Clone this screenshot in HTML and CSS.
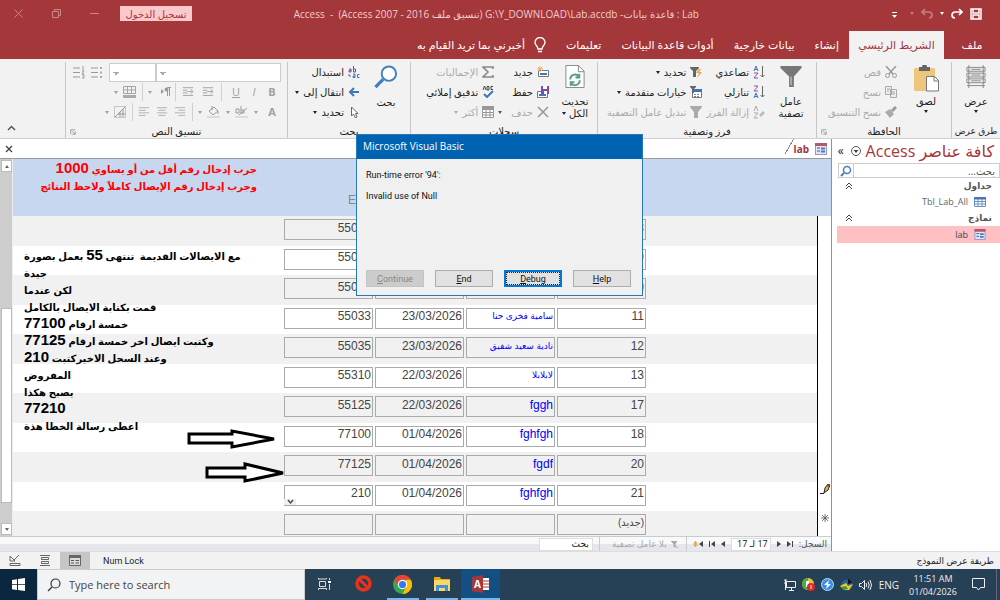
FILE: index.html
```html
<!DOCTYPE html>
<html lang="ar" dir="rtl">
<head>
<meta charset="utf-8">
<title>Lab - Access</title>
<link rel="stylesheet" href="styles.css">
</head>
<body>
<svg class="sprite" aria-hidden="true">
  <symbol id="lines" viewBox="0 0 14 14"><path d="M1 2h12M3 5h8M1 8h12M3 11h8" stroke="#aaa" fill="none"/></symbol>
  <symbol id="linesl" viewBox="0 0 14 14"><path d="M1 2h12M1 5h8M1 8h12M1 11h8" stroke="#aaa" fill="none"/></symbol>
  <symbol id="linesr" viewBox="0 0 14 14"><path d="M1 2h12M5 5h8M1 8h12M5 11h8" stroke="#aaa" fill="none"/></symbol>
  <symbol id="indent" viewBox="0 0 14 14"><path d="M1 2h12M1 5h5M1 8h5M1 11h12M6 6.500h6M10 4l3 2.500-3 2.500" stroke="#999" fill="none"/></symbol>
  <symbol id="funnel" viewBox="0 0 22 24"><path d="M0 1h22v2l-8 9v11h-5V12L0 3z" fill="#777"/><path d="M11 12v9" stroke="#ddd"/></symbol>
  <symbol id="form" viewBox="0 0 12 12"><rect x=".5" y=".5" width="11" height="11" fill="#dfe6f5" stroke="#8f9cc4"/><path d="M0 0h12v3H0z" fill="#b5586a"/><path d="M2 5h3M2 8h3" stroke="#445a96"/><path d="M6 4.500h4v2H6zM6 7.500h4v2H6z" fill="#5b73b5"/></symbol>
  <symbol id="chev" viewBox="0 0 8 8"><path d="M1 4l3-3 3 3M1 7l3-3 3 3" stroke="#444" fill="none"/></symbol>
  <symbol id="launch" viewBox="0 0 8 8"><path d="M1 7V1h6M7 3v4H3M3 3l3.500 3.500" stroke="#888" fill="none"/></symbol>
</svg>
<div class="app">
  <header class="titlebar">
    <div class="quick">
      <svg width="12" height="12" viewBox="0 0 12 12"><path d="M1 1h10v10H1zM3 1v4h6V1M3 11V7h6v4" fill="none" stroke="#fff" stroke-width="1.500"/></svg>
      <svg width="12" height="12" viewBox="0 0 12 12"><path d="M11 4H4a3 3 0 0 0 0 6M8 1l3 3-3 3" fill="none" stroke="#fff" stroke-width="1.700"/></svg>
      <span class="caret"></span>
      <svg class="dim" width="12" height="12" viewBox="0 0 12 12"><path d="M1 4h7a3 3 0 0 1 0 6M4 1L1 4l3 3" fill="none" stroke="#fff" stroke-width="1.700"/></svg>
      <span class="caret dim"></span>
      <svg class="more" width="5" height="6" viewBox="0 0 5 6"><path d="M0 .5h5" stroke="#fff"/><path d="M0 3h5L2.500 6z" fill="#fff"/></svg>
    </div>
    <h1 class="caption">Lab : قاعدة بيانات- <bdi dir="ltr">G:\Y_DOWNLOAD\Lab.accdb</bdi> (تنسيق ملف <bdi dir="ltr">Access 2007 - 2016</bdi>) &nbsp;- &nbsp;Access</h1>
    <button class="signin">تسجيل الدخول</button>
    <div class="winbtns">
      <svg width="9" height="9" viewBox="0 0 9 9"><path d="M0 4.500h9" stroke="#cd8487"/></svg>
      <svg width="9" height="9" viewBox="0 0 9 9"><path d="M.5 2.500h6v6h-6zM2.500 2V.5h6v6H7" fill="none" stroke="#cd8487"/></svg>
      <svg width="9" height="9" viewBox="0 0 9 9"><path d="M.5.5l8 8M8.500.5l-8 8" stroke="#cd8487"/></svg>
    </div>
  </header>
  <nav class="tabs">
    <button class="tab file">ملف</button>
    <button class="tab active">الشريط الرئيسي</button>
    <button class="tab">إنشاء</button>
    <button class="tab">بيانات خارجية</button>
    <button class="tab">أدوات قاعدة البيانات</button>
    <button class="tab">تعليمات</button>
    <button class="tab tell"><svg width="12" height="16" viewBox="0 0 12 16"><path d="M4 12c0-3-3-3.500-3-6.500a5 5 0 0 1 10 0C11 8.500 8 9 8 12zM4 14.500h4" fill="none" stroke="#fff" stroke-width="1.300"/></svg>أخبرني بما تريد القيام به</button>
  </nav>
  <section class="ribbon">
    <div class="group views">
      <div class="tools">
        <button class="big"><svg width="20" height="23" viewBox="0 0 20 24"><path d="M.5 2.500h19v4H.5zM.5 8.500h19v4H.5zM.5 14.500h19v4H.5zM2.500 0v24M17.500 0v24M.5 21.500h19M5 4.500h10M5 10.500h10M5 16.500h10" fill="none" stroke="#888"/></svg>عرض<span class="caret"></span></button>
      </div>
      <div class="label">طرق عرض</div>
    </div>
    <div class="group clip">
      <div class="tools">
        <button class="big"><svg width="25" height="27" viewBox="0 0 25 27"><rect x="0" y="3" width="21" height="23" rx="1" fill="#edc57c"/><path d="M5 2h3a2.500 2.500 0 0 1 5 0h3v4H5z" fill="#666"/><path d="M12.500 11.500h8l4 4v10.500h-12z" fill="#fff" stroke="#777"/><path d="M20 11v5h5" fill="none" stroke="#777"/></svg>لصق<span class="caret"></span></button>
        <div class="stack">
          <button class="off"><svg width="12" height="12" viewBox="0 0 12 12"><path d="M1 0l7 8M11 0L4 8" stroke="#999" stroke-width="1.500"/><circle cx="2.500" cy="9.500" r="2" fill="none" stroke="#999"/><circle cx="9.500" cy="9.500" r="2" fill="none" stroke="#999"/></svg>قص</button>
          <button class="off"><svg width="12" height="12" viewBox="0 0 12 12"><path d="M.5.5h6v8h-6zM5.500 3.500h6v8h-6zM2 3h3M2 5h2M7 6h3M7 8h3" fill="#eee" stroke="#aaa"/></svg>نسخ</button>
          <button class="off"><svg width="12" height="12" viewBox="0 0 12 12"><path d="M0 6l5-3 4 5-4 4z" fill="#aaa"/><path d="M7 5l4-4" stroke="#999" stroke-width="3"/></svg>نسخ التنسيق</button>
        </div>
      </div>
      <div class="label">الحافظة<svg class="launcher" width="6" height="6"><use href="#launch"/></svg></div>
    </div>
    <div class="group sort">
      <div class="tools">
        <button class="big"><svg width="22" height="23"><use href="#funnel"/></svg>عامل<br>تصفية</button>
        <div class="stack az">
          <button><svg width="12" height="14" viewBox="0 0 12 14"><path d="M1 6l2-5 2 5M1.500 4.500h3" fill="none" stroke="#3c77b8"/><path d="M1 8h4l-4 5h4" fill="none" stroke="#8d55a8"/><path d="M9.500 1v11M7.500 10l2 2 2-2" fill="none" stroke="#666"/></svg>تصاعدي</button>
          <button><svg width="12" height="14" viewBox="0 0 12 14"><path d="M1 13l2-5 2 5M1.500 11.500h3" fill="none" stroke="#3c77b8"/><path d="M1 1h4L1 6h4" fill="none" stroke="#8d55a8"/><path d="M9.500 1v11M7.500 10l2 2 2-2" fill="none" stroke="#666"/></svg>تنازلي</button>
          <button class="off"><svg width="12" height="14" viewBox="0 0 12 14"><path d="M1 6l2-5 2 5M1 8h4l-4 5h4" fill="none" stroke="#aaa"/><path d="M6 10l4-4 2 2-4 4z" fill="#bbb"/></svg>إزالة الفرز</button>
        </div>
        <div class="stack">
          <button><svg width="12" height="12" viewBox="0 0 12 12"><path d="M0 1h9v1L6 5v6H3V5L0 2z" fill="#666"/><path d="M9 3L6 7h3l-2 5 5-6H9l2-3z" fill="#eda63a"/></svg>تحديد<span class="caret"></span></button>
          <button><svg width="12" height="12" viewBox="0 0 12 12"><path d="M2.500 3.500h9v8h-9z" fill="#fff" stroke="#777"/><path d="M4 3h8v3H4z" fill="#3c77b8"/><path d="M0 0h6v1L4 3v4H2V3L0 1z" fill="#666"/><path d="M4 8.500h6M4 10.500h6" stroke="#888" stroke-dasharray="2 1"/></svg>خيارات متقدمة<span class="caret"></span></button>
          <button class="off"><svg width="12" height="12" viewBox="0 0 12 12"><path d="M0 0h12v1L8 6v6H4V6L0 1z" fill="#aaa"/></svg>تبديل عامل التصفية</button>
        </div>
      </div>
      <div class="label">فرز وتصفية</div>
    </div>
    <div class="group records">
      <div class="tools">
        <button class="big"><svg width="20" height="23" viewBox="0 0 20 24"><path d="M.5.5h13l6 6v17H.5z" fill="#fff" stroke="#888"/><path d="M13.500 0v7h6" fill="none" stroke="#888"/><path d="M5 15a5 5 0 0 1 9-3M15 16a5 5 0 0 1-9 3M14.500 9v4h-4M5.500 22v-4h4" fill="none" stroke="#56a17a" stroke-width="2"/></svg>تحديث<span class="second-line">الكل<span class="caret"></span></span></button>
        <div class="stack">
          <button><svg width="12" height="12" viewBox="0 0 12 12"><path d="M1.500 4.500h10v6h-10z" fill="#fff" stroke="#777"/><path d="M3 7h7v2H3z" fill="#3c77b8"/><path d="M3 0v6M0 3h6M1 1l4 4M5 1L1 5" stroke="#edb45c"/></svg>جديد</button>
          <button><svg width="12" height="12" viewBox="0 0 12 12"><path d="M.5 5.500h10v6H.5z" fill="#fff" stroke="#777"/><path d="M2 8h7v2H2z" fill="#3c77b8"/><path d="M4 0h8v8H4z" fill="#8549a5"/><path d="M6 0h4v3H6zM7 5h3v3H7z" fill="#fff"/></svg>حفظ</button>
          <button class="off"><svg width="12" height="12" viewBox="0 0 12 12"><path d="M1 1l10 10M11 1L1 11" stroke="#999" stroke-width="1.600"/></svg>حذف<span class="caret dark"></span></button>
        </div>
        <div class="stack">
          <button class="off"><svg width="12" height="12" viewBox="0 0 12 12"><path d="M11 3V1H1l5 5-5 5h10V9" fill="none" stroke="#888" stroke-width="1.600"/></svg>الإجماليات</button>
          <button><svg width="12" height="12" viewBox="0 0 12 12"><path d="M1 4l1.500-4L4 4M5 .5v3.500h2V.5zM11 .5H9v3h2" fill="none" stroke="#444"/><path d="M2 8l3 3 6-6" fill="none" stroke="#3c77b8" stroke-width="2"/></svg>تدقيق إملائي</button>
          <button class="off"><svg width="12" height="12" viewBox="0 0 12 12"><path d="M.5.500h11v11H.5zM0 3.500h12M0 6.500h12M0 9h12M4 3v9M8 3v9" fill="#fff" stroke="#999"/><path d="M0 0h12v3H0z" fill="#999"/></svg>أكثر<span class="caret"></span></button>
        </div>
      </div>
      <div class="label">سجلات</div>
    </div>
    <div class="group find">
      <div class="tools">
        <button class="big"><svg width="24" height="24" viewBox="0 0 24 25"><circle cx="15" cy="9" r="7.500" fill="#fff" stroke="#4280bd" stroke-width="2"/><path d="M9 15l-8 8" stroke="#4280bd" stroke-width="3.500"/></svg>بحث</button>
        <div class="stack">
          <button><svg width="12" height="13" viewBox="0 0 12 13"><path d="M1 3h2v3H1V4.500h2M5.500 0v6h2V3h-2" fill="none" stroke="#7a4a95"/><path d="M5 8h2v3.500H5V10h2M11.500 8.500h-2v3h2" fill="none" stroke="#3c77b8"/><path d="M1 8v2h2" fill="none" stroke="#3c77b8"/></svg>استبدال</button>
          <button><svg width="12" height="12" viewBox="0 0 12 12"><path d="M11 6H3M6 2L2 6l4 4" fill="none" stroke="#3c77b8" stroke-width="2"/></svg>انتقال إلى<span class="caret"></span></button>
          <button><svg width="12" height="12" viewBox="0 0 12 12"><path d="M3.500 1v9l2-2 2 4 1.500-1-1.500-3.500H10z" fill="#fff" stroke="#666"/></svg>تحديد<span class="caret"></span></button>
        </div>
      </div>
      <div class="label">بحث</div>
    </div>
    <div class="group format">
      <div class="fmt">
        <div class="frow">
          <select class="font" aria-label="الخط"><option></option></select><select class="size" aria-label="حجم الخط"><option></option></select>
          <svg width="12" height="13" viewBox="0 0 12 13"><path d="M0 2h7M0 6.500h7M0 11h7" stroke="#999"/><path d="M9 1h2v2H9zM9 5.500h2v2H9zM9 10h2v2H9z" fill="#aaa"/></svg>
          <svg width="12" height="13" viewBox="0 0 12 13"><path d="M0 2h7M0 6.500h7M0 11h7M10 0v4M9 5h2l-2 3h2M9 9h2v3H9" fill="none" stroke="#999"/></svg>
        </div>
        <div class="frow r2">
          <button><b>B</b></button><button><i>I</i></button><button><u>U</u></button><span class="sep"></span>
          <svg width="14" height="12"><use href="#indent"/></svg><svg width="14" height="12"><use href="#indent"/></svg><span class="sep"></span>
          <button aria-label="اتجاه النص"><svg class="para" width="10" height="9" viewBox="0 0 10 9"><path d="M0 2l3 2.500L0 7z" fill="#999"/><path d="M6.500 9V.5H10M8.500 0v9" fill="none" stroke="#999"/><circle cx="5.500" cy="2.500" r="2" fill="#999"/></svg></button><span class="caret"></span><span class="sep"></span>
          <svg width="13" height="12" viewBox="0 0 13 12"><path d="M.5.5h12v7H.5zM0 4h13M4.500 0v8M8.500 0v8" fill="none" stroke="#a9a0a9"/><path d="M0 9h13v3H0z" fill="#aaa"/></svg><span class="caret"></span>
        </div>
        <div class="frow r3">
          <button><b>A</b></button><span class="caret"></span>
          <svg width="13" height="12" viewBox="0 0 13 12"><path d="M1 3h3v4H1zM6 0v7h3V4H6M12 2L4 9" fill="none" stroke="#999"/><path d="M0 10h13v2H0z" fill="#e0dbe0"/></svg><span class="caret"></span>
          <svg width="13" height="12" viewBox="0 0 13 12"><path d="M2 5l5-4 4 4-5 4zM11 5v3M5 0v4" fill="none" stroke="#999"/><path d="M0 10h13v2H0z" fill="#e0dbe0"/></svg><span class="caret"></span><span class="sep"></span>
          <svg width="12" height="12"><use href="#linesr"/></svg><svg width="12" height="12"><use href="#lines"/></svg><svg width="12" height="12"><use href="#linesl"/></svg><span class="sep"></span>
          <svg width="12" height="12" viewBox="0 0 12 12"><path d="M.5.5h11v11H.5z" fill="none" stroke="#999" stroke-dasharray="1 1"/><path d="M1 11L11 1M6 6v5M9 3v8M4 8h7" stroke="#999"/></svg><span class="caret"></span>
        </div>
      </div>
      <div class="label">تنسيق النص<svg class="launcher" width="6" height="6"><use href="#launch"/></svg></div>
    </div>
    <button class="collapse" aria-label="طي الشريط"><svg width="9" height="6" viewBox="0 0 9 6"><path d="M1 5l3.500-3.500L8 5" fill="none" stroke="#555" stroke-width="1.500"/></svg></button>
  </section>

  <main class="work">
    <aside class="navpane">
      <div class="navhead"><h2>كافة عناصر Access</h2><svg width="10" height="10" viewBox="0 0 10 10"><circle cx="5" cy="5" r="4.500" fill="none" stroke="#555"/><path d="M2.500 4h5L5 7z" fill="#444"/></svg><span class="shut">»</span></div>
      <div class="navsearch"><input type="text" aria-label="بحث" placeholder="بحث..."><svg width="14" height="12" viewBox="0 0 14 12"><circle cx="8" cy="5" r="3.500" fill="none" stroke="#4a7cb5" stroke-width="1.500"/><path d="M5 8l-3 3" stroke="#4a7cb5" stroke-width="2"/></svg></div>
      <div class="navgroup">جداول<svg width="8" height="8"><use href="#chev"/></svg></div>
      <div class="navitem"><svg width="12" height="10" viewBox="0 0 12 10"><path d="M.5.500h11v9H.5zM0 4.500h12M0 7h12M4 2v8M8 2v8" fill="#fff" stroke="#6c8fc4"/><path d="M0 0h12v2.500H0z" fill="#4e74b5"/></svg>Tbl_Lab_All</div>
      <div class="navgroup">نماذج<svg width="8" height="8"><use href="#chev"/></svg></div>
      <div class="navitem selected"><svg width="12" height="11"><use href="#form"/></svg>lab</div>
    </aside>
    <section class="doc">
      <div class="docbar">
        <div class="doctab"><svg width="12" height="12"><use href="#form"/></svg><b>lab</b></div>
        <button class="docclose" aria-label="إغلاق"><svg width="8" height="8" viewBox="0 0 8 8"><path d="M1 1l6 6M7 1L1 7" stroke="#444" stroke-width="1.300"/></svg></button>
      </div>
      <div class="formview">
        <div class="sheet">
          <div class="formhead"><p>جرب إدخال رقم أقل من أو يساوي <span class="n">1000</span><br>وجرب إدخال رقم الإيصال كاملاً ولاحظ النتائج</p><span class="colhead">E</span></div>
          <div class="formbody">
            <div class="selector">
              <svg width="10" height="10" viewBox="0 0 10 10"><path d="M0 9.500h4" stroke="#222"/><path d="M4 9l1-5 3-4 2 1-2 5z" fill="#d9c03b" stroke="#222"/><path d="M7 1l2 1" stroke="#c33" stroke-width="2"/></svg>
              <svg width="8" height="8" viewBox="0 0 8 8"><path d="M4 0v8M0 4h8M1 1l6 6M7 1L1 7" stroke="#555" stroke-width=".8"/></svg>
            </div>
            <div class="rows">
              <div class="row"><input aria-label="م" value="8"><input aria-label="الاسم" class="name" value=""><input aria-label="التاريخ" value=""><input aria-label="الإيصال" value="55030"></div>
              <div class="row"><input aria-label="م" value="9"><input aria-label="الاسم" class="name" value=""><input aria-label="التاريخ" value=""><input aria-label="الإيصال" value="55031"></div>
              <div class="row"><input aria-label="م" value="10"><input aria-label="الاسم" class="name" value=""><input aria-label="التاريخ" value=""><input aria-label="الإيصال" value="55032"></div>
              <div class="row"><input aria-label="م" value="11"><input aria-label="الاسم" class="name ar" value="سامية فخرى حنا"><input aria-label="التاريخ" value="23/03/2026"><input aria-label="الإيصال" value="55033"></div>
              <div class="row"><input aria-label="م" value="12"><input aria-label="الاسم" class="name ar" value="نادية سعيد شفيق"><input aria-label="التاريخ" value="23/03/2026"><input aria-label="الإيصال" value="55035"></div>
              <div class="row"><input aria-label="م" value="13"><input aria-label="الاسم" class="name ar" value="لابلابلا"><input aria-label="التاريخ" value="22/03/2026"><input aria-label="الإيصال" value="55310"></div>
              <div class="row"><input aria-label="م" value="17"><input aria-label="الاسم" class="name" value="fggh"><input aria-label="التاريخ" value="22/03/2026"><input aria-label="الإيصال" value="55125"></div>
              <div class="row"><input aria-label="م" value="18"><input aria-label="الاسم" class="name" value="fghfgh"><input aria-label="التاريخ" value="01/04/2026"><input aria-label="الإيصال" value="77100"></div>
              <div class="row"><input aria-label="م" value="20"><input aria-label="الاسم" class="name" value="fgdf"><input aria-label="التاريخ" value="01/04/2026"><input aria-label="الإيصال" value="77125"></div>
              <div class="row current"><input aria-label="م" value="21"><input aria-label="الاسم" class="name" value="fghfgh"><input aria-label="التاريخ" value="01/04/2026"><input aria-label="الإيصال" value="210"><svg class="drop" width="12" height="6" viewBox="0 0 12 6"><path d="M0 0h12v6H0z" fill="#eee"/><path d="M4 1l2.500 3L9 1" fill="none" stroke="#444" stroke-width="1.300"/></svg></div>
              <div class="row new"><input aria-label="م" class="ar" value="(جديد)"><input aria-label="الاسم" value=""><input aria-label="التاريخ" value=""><input aria-label="الإيصال" value=""></div>
            </div>
            <div class="notes">مع الايصالات القديمة &nbsp;تنتهى <span class="n">55</span> بعمل بصورة<br>جيدة<br>لكن عندما<br>قمت بكتابة الايصال بالكامل<br>خمسة ارقام <span class="n">77100</span><br>وكتبت ايصال اخر خمسة ارقام <span class="n">77125</span><br>وعند السحل الاخيركتبت <span class="n">210</span><br>المفروض<br>يصبح هكذا<br><span class="n">77210</span><br>اعطى رسالة الخطا هذة</div>
            <svg class="arrow first" width="90" height="20" viewBox="0 0 90 20"><path d="M2 5h43V2l42 8-42 8v-4H2z" fill="#fff" stroke="#000" stroke-width="3"/></svg>
            <svg class="arrow second" width="80" height="22" viewBox="0 0 80 22"><path d="M2 6h38V2l38 9-38 8v-4H2z" fill="#fff" stroke="#000" stroke-width="3"/></svg>
          </div>
        </div>
        <div class="scroll">
          <button aria-label="أعلى"><span class="up"></span></button><div class="track"><div class="thumb"></div></div><button aria-label="أسفل"><span class="caret"></span></button>
        </div>
      </div>
      <div class="recnav">
        <span>السجل:</span>
        <svg width="6" height="6" viewBox="0 0 6 6"><path d="M0 0l4 3-4 3zM5 0h1v6H5z" fill="#444"/></svg>
        <svg width="4" height="6" viewBox="0 0 4 6"><path d="M0 0l4 3-4 3z" fill="#444"/></svg>
        <input class="pos" aria-label="السجل الحالي" value="17 لـ 17">
        <svg width="4" height="6" viewBox="0 0 4 6"><path d="M4 0L0 3l4 3z" fill="#444"/></svg>
        <svg width="6" height="6" viewBox="0 0 6 6"><path d="M6 0L2 3l4 3zM0 0h1v6H0z" fill="#444"/></svg>
        <svg width="10" height="8" viewBox="0 0 10 8"><path d="M10 1L6 4l4 3z" fill="#444"/><path d="M2.500 1v6M0 4h5M1 2l3 4M4 2L1 6" stroke="#eaa63a"/></svg>
        <span class="nofilter"><svg width="7" height="7" viewBox="0 0 7 7"><path d="M0 0h6L4 3v3H3V3zM3 4l4 3" fill="#aaa" stroke="#aaa"/></svg>بلا عامل تصفية</span>
        <input class="recsearch" aria-label="بحث" value="بحث">
      </div>
    </section>
  </main>

  <footer class="status">
    <span class="mode">طريقة عرض النموذج</span>
    <span class="num">Num Lock</span>
    <div class="viewbtns">
      <button class="on" aria-label="نموذج"><svg width="12" height="11" viewBox="0 0 12 11"><path d="M.5.500h11v10H.5z" fill="#ddd" stroke="#666"/><path d="M0 0h12v3H0z" fill="#666"/><path d="M2 5.500h3M2 8h3M6.500 5.500H10M6.500 8H10" stroke="#555"/></svg></button>
      <button aria-label="تخطيط"><svg width="10" height="11" viewBox="0 0 10 11"><path d="M0 .5h10M0 10.500h10M1.500 2.500h7v2h-7zM1.500 6.500h7v2h-7z" fill="none" stroke="#666"/></svg></button>
      <button aria-label="تصميم"><svg width="12" height="11" viewBox="0 0 12 11"><path d="M1 1v5h5zM5 5l5-5M1 8.500h10v2H1z" fill="none" stroke="#666"/></svg></button>
    </div>
  </footer>

  <footer class="taskbar" dir="ltr">
    <button class="start" aria-label="Start"><svg width="13" height="13" viewBox="0 0 13 13"><path d="M0 2l5-.8v5H0zM6 1l7-1v6.200H6zM0 7h5v5l-5-.8zM6 7h7v6l-7-1z" fill="#fff"/></svg></button>
    <label class="tasksearch"><svg width="14" height="14" viewBox="0 0 14 14"><circle cx="8.500" cy="5.500" r="4.500" fill="none" stroke="#333" stroke-width="1.200"/><path d="M5 9l-4 4" stroke="#333" stroke-width="1.200"/></svg><input type="text" aria-label="Search" placeholder="Type here to search"></label>
    <button class="task" aria-label="Task view"><svg width="13" height="12" viewBox="0 0 13 12"><path d="M1.500 3.500h6v5h-6zM.5 1.500V0M.5 1h8V0M.5 12v-1.500h8V12M11.500 0v2M11.500 6v6" fill="none" stroke="#ddd"/><path d="M10 3h3v2h-3z" fill="#fff"/></svg></button>
    <button class="task" aria-label="Block"><svg width="17" height="17" viewBox="0 0 17 17"><circle cx="8.500" cy="8.500" r="6.500" fill="none" stroke="#e8331c" stroke-width="3.500"/><path d="M4 4l9 9" stroke="#e8331c" stroke-width="3"/></svg></button>
    <button class="task open" aria-label="Chrome"><svg width="19" height="19" viewBox="0 0 20 20"><circle cx="10" cy="10" r="10" fill="#34a853"/><path d="M1.300 5a10 10 0 0 1 17.400 0H10L6 12z" fill="#ea4335"/><path d="M18.700 5A10 10 0 0 1 10 20l4-8-1-7z" fill="#fbbc04"/><circle cx="10" cy="10" r="5" fill="#fff"/><circle cx="10" cy="10" r="3.800" fill="#3b78e7"/></svg></button>
    <button class="task open" aria-label="File Explorer"><svg width="18" height="15" viewBox="0 0 18 15"><path d="M1 0h6l1 2h9v12H1z" fill="#e8a91c"/><path d="M1 3h16v11H1z" fill="#fcd667"/><path d="M3 14V8h12v6h-3v-3H6v3z" fill="#3b93d8"/></svg></button>
    <button class="task open active" aria-label="Access"><svg width="18" height="18" viewBox="0 0 18 18"><path d="M10 3h7v12h-7z" fill="#fff"/><path d="M10 6h8M10 9h8M10 12h8" stroke="#a4373a"/><path d="M0 2l11-2v18L0 16z" fill="#a4373a"/><text class="logo" x="2" y="13">A</text></svg></button>
    <div class="tray">
      <svg width="13" height="12" viewBox="0 0 13 12"><path d="M3.500 2.500h9v6h-9zM6 11.500h5M8.500 9v2M1 1h3M2.500 1v10M1 4h2" fill="none" stroke="#eee"/></svg>
      <svg width="13" height="13" viewBox="0 0 13 13"><circle cx="6" cy="6" r="6" fill="#e6c63a"/><path d="M0 6a6 6 0 0 1 6-6v12a6 6 0 0 1-6-6z" fill="#4cab45"/><path d="M4 3h3v6H4z" fill="#fff"/><circle cx="9" cy="9" r="4" fill="#e12727"/><path d="M9 7v4" stroke="#fff"/></svg>
      <svg width="13" height="13" viewBox="0 0 13 13"><circle cx="6.500" cy="6.500" r="6" fill="#3a8fe8" stroke="#b9dcfa"/><path d="M8 2L3 7h3l-1 4 5-5H7z" fill="#fff"/></svg>
      <svg width="13" height="12" viewBox="0 0 13 12"><circle cx="7" cy="6" r="5.500" fill="#2a5fa8"/><path d="M0 7l6-3 2 3 5-2-4 6H4z" fill="#f0cc1e"/><path d="M1 8l5-1 2 3-4 1z" fill="#3a9a3a"/><path d="M8 0a6 6 0 0 1 4 4L8 5z" fill="#111"/></svg>
      <svg width="13" height="12" viewBox="0 0 13 12"><path d="M.5 4.500h2l3-3v9l-3-3h-2zM7 4q1.500 2 0 4M9 2.500q2.500 3.500 0 7M11 1q3 5 0 10" fill="none" stroke="#eee"/></svg>
      <span class="lang">ENG</span>
      <time class="clock">11:51 AM<br>01/04/2026</time>
      <svg class="notif" width="13" height="13" viewBox="0 0 13 13"><path d="M.5.5h12v9h-4l-2 2.500-2-2.500h-4z" fill="none" stroke="#eee"/></svg>
      <span class="peek"></span>
    </div>
  </footer>

  <div class="dialog" role="dialog" aria-labelledby="dlg" dir="ltr">
    <h2 id="dlg">Microsoft Visual Basic</h2>
    <div class="dbody">
      <p>Run-time error '94':</p>
      <p>Invalid use of Null</p>
    </div>
    <div class="dbtns">
      <button disabled><u>C</u>ontinue</button>
      <button><u>E</u>nd</button>
      <button class="default"><u>D</u>ebug</button>
      <button><u>H</u>elp</button>
    </div>
  </div>
</div>
</body>
</html>
```
FILE: styles.css
```css
* { box-sizing: border-box; }
body { margin: 0; background: #f2f2f2; color: #222; font: 10px/14px "Open Sans", "DejaVu Sans", sans-serif; }
button, input, select { font: inherit; color: inherit; border: 0; padding: 0; margin: 0; background: none; border-radius: 0; }
h1, h2, p { margin: 0; font-weight: 400; }
svg { flex: none; }
.sprite { display: none; }
.app { position: relative; display: flex; flex-direction: column; min-height: 100vh; }
.caret { flex: none; display: inline-block; border: 2px solid transparent; border-top: 3px solid currentColor; border-bottom: 0; }
.dim { opacity: .35; }

.titlebar { height: 31px; display: flex; align-items: center; background: #a4373a; color: #f3cccd; padding: 0 18px 4px 14px; }
.quick { display: flex; align-items: center; gap: 7px; color: #fff; width: 120px; }
.quick .more { margin: 3px 6px 0 0; }
.caption { flex: 1; font-size: 10px; padding-right: 163px; white-space: nowrap; }
.signin { width: 72px; height: 15px; line-height: 14px; background: #fbc8cb; color: #a4373a; }
.winbtns { display: flex; gap: 29px; padding-right: 21px; }

.tabs { height: 28px; display: flex; background: #a4373a; color: #fff; font-size: 11px; }
.tab { padding: 0 10px; white-space: nowrap; }
.tab.file { width: 56px; }
.tab.active { width: 95px; background: #f2f2f2; color: #a4373a; padding: 0; }
.tell { display: flex; align-items: center; gap: 9px; }

.ribbon { height: 80px; display: flex; border-bottom: 1px solid #d0d0d0; background: #f2f2f2; padding-top: 3px; white-space: nowrap; }
.group { display: flex; flex-direction: column; border-left: 1px solid #c6c6c6; }
.tools { flex: 1; display: flex; gap: 4px; }
.label { position: relative; text-align: center; height: 13px; line-height: 12px; }
.views .label { font-size: 9px; }
.launcher { position: absolute; left: 4px; bottom: 3px; }
.big { display: flex; flex-direction: column; align-items: center; justify-content: flex-start; padding-top: 3px; line-height: 12px; height: 60px; }
.big svg { margin-bottom: 7px; }
.big > .caret { margin-top: 3px; }
.second-line { display: flex; align-items: center; gap: 3px; }
.stack { display: grid; grid-template-rows: repeat(3, 20px); justify-items: start; }
.stack button { display: flex; align-items: center; gap: 4px; }
.off { color: #aaa; }
.caret.dark { color: #555; margin-right: 5px; }
.views { width: 49px; }
.views .big { width: 48px; }
.clip { width: 135px; }
.clip .big { width: 50px; }
.clip .big svg { margin-bottom: 3px; }
.sort { width: 219px; }
.sort .big { width: 44px; margin-right: 3px; }
.records { width: 187px; }
.records .big { width: 44px; }
.find { width: 123px; }
.find .big { width: 44px; margin-right: 2px; }
.format { width: 222px; }
.fmt { flex: 1; color: #a0a0a0; padding-right: 6px; }
.frow { height: 20px; display: flex; align-items: center; }
.frow button { width: 18px; font-size: 11px; }
.frow select { appearance: none; height: 19px; border: 1px solid #ccc; background: linear-gradient(to bottom left, #aaa 50%, transparent 50%) 3px 8px / 3px 3px no-repeat, linear-gradient(to bottom right, #aaa 50%, transparent 50%) 6px 8px / 3px 3px no-repeat, #fff; }
.frow .font { width: 125px; }
.frow .size { width: 47px; }
.frow svg { margin-right: 6px; }
.frow .para { margin: 0; }
.frow .caret { margin-right: 5px; }
.sep { width: 1px; height: 18px; background: #d0d0d0; margin-right: 5px; }
.collapse { margin: auto auto 4px 7px; }

.work { flex: 1; display: flex; min-height: 0; background: #fff; }
.navpane { width: 168px; padding-left: 5px; background: #fff; }
.navhead { display: flex; align-items: center; gap: 5px; height: 24px; padding: 0 6px; }
.navhead h2 { font-size: 16px; color: #a4373a; white-space: nowrap; }
.shut { font-size: 12px; padding-right: 2px; }
.navsearch { display: flex; align-items: center; height: 15px; border: 1px solid #ccc; margin-left: 1px; }
.navsearch input { flex: 1; min-width: 0; height: 13px; border-left: 1px solid #ccc; padding: 0 4px; }
.navsearch input::placeholder { color: #555; }
.navgroup { display: flex; align-items: center; justify-content: space-between; height: 16px; padding: 0 8px; font-size: 9px; font-weight: 700; color: #555; }
.navitem { display: flex; align-items: center; gap: 6px; height: 16px; padding-right: 14px; color: #666; font-size: 9px; }
.selected { background: #ffc0c4; height: 17px; color: #444; }

.doc { flex: 1; min-width: 0; display: flex; flex-direction: column; border-right: 1px solid #8a93a0; }
.docbar { height: 20px; display: flex; justify-content: space-between; align-items: stretch; border-bottom: 1px solid #999; }
.doctab { display: flex; align-items: center; gap: 6px; padding: 0 4px 0 8px; color: #a4373a; width: 46px; background: linear-gradient(120deg, #fff 7px, #888 7px, #888 8px, #fff 8px); }
.docclose { padding: 0 5px; }
.formview { flex: 1; display: flex; min-height: 0; }
.sheet { flex: 1; display: flex; flex-direction: column; }
.formhead { position: relative; height: 57px; background: #c6d7ef; color: #f00; font: 700 10px/17px "Liberation Sans", "DejaVu Sans", sans-serif; }
.formhead p { padding: 2px 574px 0 0; font-weight: 700; white-space: nowrap; }
.n { font-size: 15px; line-height: 1px; }
.colhead { position: absolute; left: 335px; top: 33px; font-size: 12px; font-weight: 400; color: #888; }
.formbody { position: relative; flex: 1; display: flex; }
.rows { flex: 1; display: flex; flex-direction: column; border-right: 1px solid #000; }
.row { position: relative; flex: 1; display: grid; grid-template-columns: repeat(4, 89px); gap: 2px; padding: 3px 171px 0 0; align-items: start; background: #fff; }
.row:nth-child(odd) { background: #f1f1f1; }
.row.new { flex: none; height: 25px; }
.row input { width: 89px; height: 21px; border: 1px solid #aaa; padding: 0 1px 4px; direction: ltr; text-align: right; font: 12px/16px "Liberation Sans", "DejaVu Sans", sans-serif; color: #444; }
.row input.name { color: #00f; }
.row input.ar { direction: rtl; font-size: 9px; }
.row.new input.ar { font-size: 10px; }
.drop { position: absolute; left: 271px; top: 17px; }
.selector { width: 13px; display: flex; flex-direction: column; justify-content: flex-end; align-items: center; gap: 20px; padding-bottom: 14px; }
.notes { position: absolute; left: 11px; top: 32px; text-align: left; font: 700 10px/17px "Liberation Sans", "DejaVu Sans", sans-serif; color: #000; white-space: nowrap; }
.arrow { position: absolute; }
.first { left: 174px; top: 213px; }
.second { left: 192px; top: 246px; }
.scroll { width: 13px; display: flex; flex-direction: column; background: #cdcdcd; padding: 1px 0 1px 1px; border-right: 1px solid #eee; }
.scroll button { height: 12px; background: #fff; border: 1px solid #bbb; display: flex; align-items: center; justify-content: center; color: #666; }
.up { border: 2px solid transparent; border-bottom: 3px solid #666; border-top: 0; }
.track { flex: 1; display: flex; flex-direction: column; }
.thumb { margin: 136px 0 20px; flex: 1; background: #fff; border: 1px solid #bbb; }
.recnav { height: 15px; display: flex; align-items: center; gap: 6px; border-top: 1px solid #ccc; background: linear-gradient(#f8f9fb 50%, #e6e7ec 50%); padding-right: 4px; font-size: 9px; color: #555; white-space: nowrap; }
.recnav input { height: 13px; background: #fff; border: 1px solid #ddd; color: #111; padding: 0 3px; }
.recnav .pos { width: 40px; padding: 0 2px; }
.recnav .recsearch { width: 54px; }
.nofilter { display: flex; align-items: center; gap: 4px; color: #aaa; border: 1px solid #ccc; border-width: 0 1px; width: 88px; padding-right: 8px; }

.status { height: 18px; display: flex; align-items: center; border-top: 1px solid #ddd; background: #f2f2f2; }
.mode { flex: 1; padding-right: 6px; font-size: 9px; }
.num { padding-left: 13px; font-family: Roboto, sans-serif; font-size: 9px; }
.viewbtns { display: flex; height: 100%; }
.viewbtns button { width: 30px; display: flex; align-items: center; justify-content: center; }
.viewbtns .on { background: #c6c6c6; }

.taskbar { height: 31px; display: flex; background: #264056; color: #eee; }
.start { width: 37px; background: #0b2740; }
.tasksearch { width: 268px; display: flex; align-items: center; gap: 8px; background: #f2f3f5; border: 1px solid #ccc; padding-left: 9px; }
.tasksearch input { flex: 1; font-size: 11px; color: #333; }
.tasksearch input::placeholder { color: #444; }
.start, .task { display: flex; align-items: center; justify-content: center; }
.task { width: 39px; border-bottom: 2px solid transparent; }
.open { background: linear-gradient(#76b9ed, #76b9ed) center bottom / 32px 2px no-repeat; border: 0; }
.task.active { background: #134f82; border-bottom: 2px solid #76b9ed; }
.logo { font: 700 10px "Open Sans", sans-serif; fill: #fff; }
.tray { flex: 1; display: flex; align-items: center; justify-content: flex-end; gap: 6px; }
.lang { padding-left: 1px; }
.clock { width: 56px; text-align: center; font-size: 9px; line-height: 13px; }
.notif { margin: 0 5px; }
.peek { width: 4px; height: 31px; border-left: 1px solid #667; }

.dialog { position: absolute; left: 356px; top: 134px; width: 287px; height: 162px; display: flex; flex-direction: column; background: #f0f0f0; border: 1px solid #2878b8; color: #111; font-family: "Open Sans", sans-serif; }
.dialog h2 { height: 24px; line-height: 23px; padding-left: 6px; background: #0063b1; color: #fff; font-size: 10px; }
.dbody { flex: 1; padding: 9px 9px; font: 9px/14px Roboto, sans-serif; }
.dbody p { margin-bottom: 7px; }
.dbtns { display: grid; grid-template-columns: repeat(4, 58px); gap: 11px; padding: 0 9px 8px; }
.dbtns button { height: 17px; background: #e1e1e1; border: 1px solid #adadad; font: 9px/12px Roboto, sans-serif; }
.dbtns button:disabled { background: #ccc; border-color: #c4c4c4; color: #888; }
.dbtns .default { border: 2px solid #0078d7; outline: 1px dotted #222; outline-offset: -3px; }
```
